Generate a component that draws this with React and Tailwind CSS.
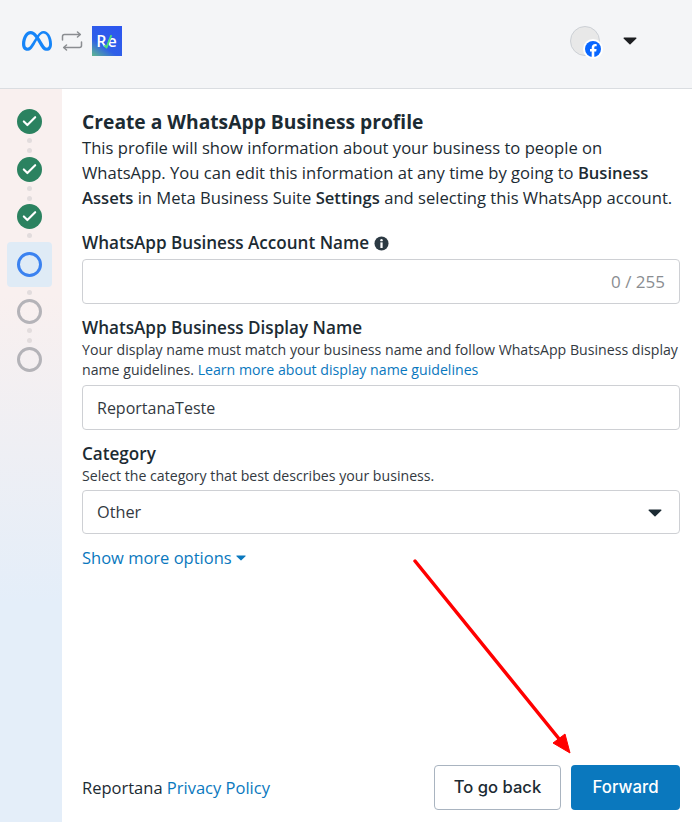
import { Check } from 'lucide-react';
import { FaMeta } from 'react-icons/fa6';

const bodyFont = "font-['Open_Sans','Noto_Sans',sans-serif]";

const SwapIcon = () => (
  <svg width="22" height="20" viewBox="0 0 22 20" fill="none" stroke="#8a8d91" strokeWidth="1.5" strokeLinecap="round" strokeLinejoin="round">
    <path d="M1.5 9V5.5q0-2 2-2h15.5" />
    <path d="M16.5 1l2.8 2.5-2.8 2.5" />
    <path d="M20.5 11v3.5q0 2-2 2H3" />
    <path d="M5.5 14l-2.8 2.5 2.8 2.5" />
  </svg>
);

const ReLogo = () => (
  <div className="relative flex h-[30px] w-[30px] items-center justify-center overflow-hidden bg-[linear-gradient(35deg,#5fb98f_0%,#2f5fe8_35%,#2b55f0_100%)]">
    <span className={`${bodyFont} text-[16px] leading-none font-semibold tracking-[1px] text-white`}>Re</span>
    <svg className="absolute top-[9px] left-[12px]" width="8" height="14" viewBox="0 0 8 14" fill="none">
      <path d="M1 11l1.5 1.5L7 1" stroke="#4fe07a" strokeWidth="2" strokeLinecap="round" strokeLinejoin="round" />
    </svg>
  </div>
);

const FacebookBadge = () => (
  <svg width="16" height="16" viewBox="0 0 16 16">
    <circle cx="8" cy="8" r="8" fill="#0866ff" />
    <path d="M6.7 16V10.4H5V8h1.7V6.9C6.7 4.2 8 3 10.2 3c.6 0 1.2.1 1.5.2v2.1h-1c-1 0-1.4.5-1.4 1.4V8h2.3l-.4 2.4H9.3V16z" fill="#fff" />
  </svg>
);

const Caret = ({ className }) => (
  <svg className={className} viewBox="0 0 14 8">
    <path d="M1 .5h12a.6.6 0 0 1 .4 1L7.5 7.3a.7.7 0 0 1-1 0L.6 1.5a.6.6 0 0 1 .4-1z" fill="currentColor" />
  </svg>
);

const Dot = () => <span className="h-[5px] w-[5px] rounded-full bg-[#e2dcdd]" />;

const DoubleDots = ({ className }) => (
  <div className={`flex flex-col items-center justify-center gap-[5px] ${className}`}>
    <Dot />
    <Dot />
  </div>
);

const DoneStep = () => (
  <div className="flex h-[25px] w-[25px] items-center justify-center rounded-full bg-[#2b8260]">
    <Check size={17} strokeWidth={3} className="text-white" />
  </div>
);

const OpenStep = () => <div className="h-[25px] w-[25px] rounded-full border-[3px] border-[#b4b3b8]" />;

const Sidebar = () => (
  <aside className="flex w-[62px] shrink-0 flex-col items-center bg-[linear-gradient(180deg,#f9f0ef_0%,#f9f0ef_28%,#e4eef9_70%,#e4eef9_100%)] pt-[20px] pr-[3px]">
    <DoneStep />
    <DoubleDots className="h-[23px]" />
    <DoneStep />
    <DoubleDots className="h-[22px]" />
    <DoneStep />
    <div className="flex h-[13px] items-center"><Dot /></div>
    <div className="flex h-[45px] w-[45px] items-center justify-center rounded-[4px] bg-[#dfebf6]">
      <div className="h-[25px] w-[25px] rounded-full border-[3px] border-[#3b82f0]" />
    </div>
    <div className="flex h-[11.5px] items-center"><Dot /></div>
    <OpenStep />
    <DoubleDots className="h-[23px]" />
    <OpenStep />
  </aside>
);

const fieldClass = 'flex w-full items-center rounded-[4px] border border-[#ced0d4] bg-white px-[14px] text-[#33393f]';

export default function App() {
  return (
    <div className={`relative flex h-[822px] w-[692px] flex-col overflow-hidden bg-white text-[#1c2b33] ${bodyFont}`}>
      <header className="flex h-[89px] shrink-0 items-center border-b border-[#dadde1] bg-[#f4f5f7] pb-[6px] pl-[22px]">
        <FaMeta size={30} className="text-[#1685f8]" />
        <div className="ml-[9px]"><SwapIcon /></div>
        <div className="ml-[9px]"><ReLogo /></div>
        <div className="relative ml-[448px] h-[30px] w-[30px] rounded-full border border-[#ccd0d5] bg-[#e8e8e8]">
          <div className="absolute right-[-4px] bottom-[-4px] rounded-full bg-white p-[2px]">
            <FacebookBadge />
          </div>
        </div>
        <Caret className="ml-[23px] h-[8px] w-[14px] text-[#1c1e21]" />
      </header>

      <div className="flex min-h-0 flex-1">
        <Sidebar />
        <main className="flex min-w-0 flex-1 flex-col pt-[21px] pr-[12px] pb-[12px] pl-[20px]">
          <h1 className="text-[19.25px] leading-[24px] font-bold">Create a WhatsApp Business profile</h1>
          <p className="mt-[1px] text-[16.6px] leading-[25px]">
            This profile will show information about your business to people on WhatsApp. You can edit this information at any time by going to <b className="font-semibold">Business Assets</b> in Meta Business Suite <b className="font-semibold">Settings</b> and selecting this WhatsApp account.
          </p>

          <label className="mt-[21px] flex items-center gap-[5px] text-[17.1px] leading-[24px] font-semibold">
            WhatsApp Business Account Name
            <svg width="15" height="15" viewBox="0 0 16 16">
              <circle cx="8" cy="8" r="7.5" fill="#2c3a43" />
              <circle cx="8" cy="4.4" r="1.3" fill="#fff" />
              <rect x="6.8" y="6.8" width="2.4" height="6" fill="#fff" />
            </svg>
          </label>
          <div className={`${fieldClass} mt-[4px] h-[45px] justify-end`}>
            <span className="text-[17px] text-[#8a8d91]">0 / 255</span>
          </div>

          <label className="mt-[12px] text-[17.1px] leading-[24px] font-semibold">WhatsApp Business Display Name</label>
          <p className="text-[14.15px] leading-[20px] text-[#33393f]">
            Your display name must match your business name and follow WhatsApp Business display name guidelines. <a className="text-[#0a78be]">Learn more about display name guidelines</a>
          </p>
          <div className={`${fieldClass} mt-[5px] h-[45px] pt-[1px] text-[16px]`}>ReportanaTeste</div>

          <label className="mt-[12px] text-[17.1px] leading-[24px] font-semibold">Category</label>
          <p className="text-[14.15px] leading-[20px] text-[#33393f]">Select the category that best describes your business.</p>
          <div className={`${fieldClass} mt-[4px] h-[44px] justify-between pt-[1px] pr-[17px] text-[16.3px]`}>
            Other
            <Caret className="h-[8px] w-[14px] text-[#1c2b33]" />
          </div>

          <a className="mt-[12px] flex items-center gap-[4px] text-[16.5px] leading-[24px] text-[#0a78be]">
            Show more options
            <Caret className="h-[6px] w-[10px] text-[#0a78be]" />
          </a>

          <footer className="mt-auto flex items-center justify-between">
            <span className="pt-[1px] text-[16.5px]">Reportana <a className="text-[#0a78be]">Privacy Policy</a></span>
            <div className="flex gap-[10px]">
              <button className="h-[45px] w-[127px] rounded-[4px] border border-[#a9b4c0] bg-white font-['Inter',sans-serif] text-[16.6px] font-medium">To go back</button>
              <button className="h-[45px] w-[109px] rounded-[4px] bg-[#0a78be] font-['Inter',sans-serif] text-[16.8px] font-medium text-white">Forward</button>
            </div>
          </footer>
        </main>
      </div>

      {/* annotation arrow drawn over the page */}
      <svg className="pointer-events-none absolute top-[555px] left-[410px]" width="170" height="205" viewBox="0 0 170 205" fill="none">
        <path d="M5 6L150 185" stroke="#ff0000" strokeWidth="3.5" strokeLinecap="round" />
        <path d="M160 198L143 188L155 179z" fill="#ff0000" stroke="#ff0000" strokeWidth="1" />
      </svg>
    </div>
  );
}
